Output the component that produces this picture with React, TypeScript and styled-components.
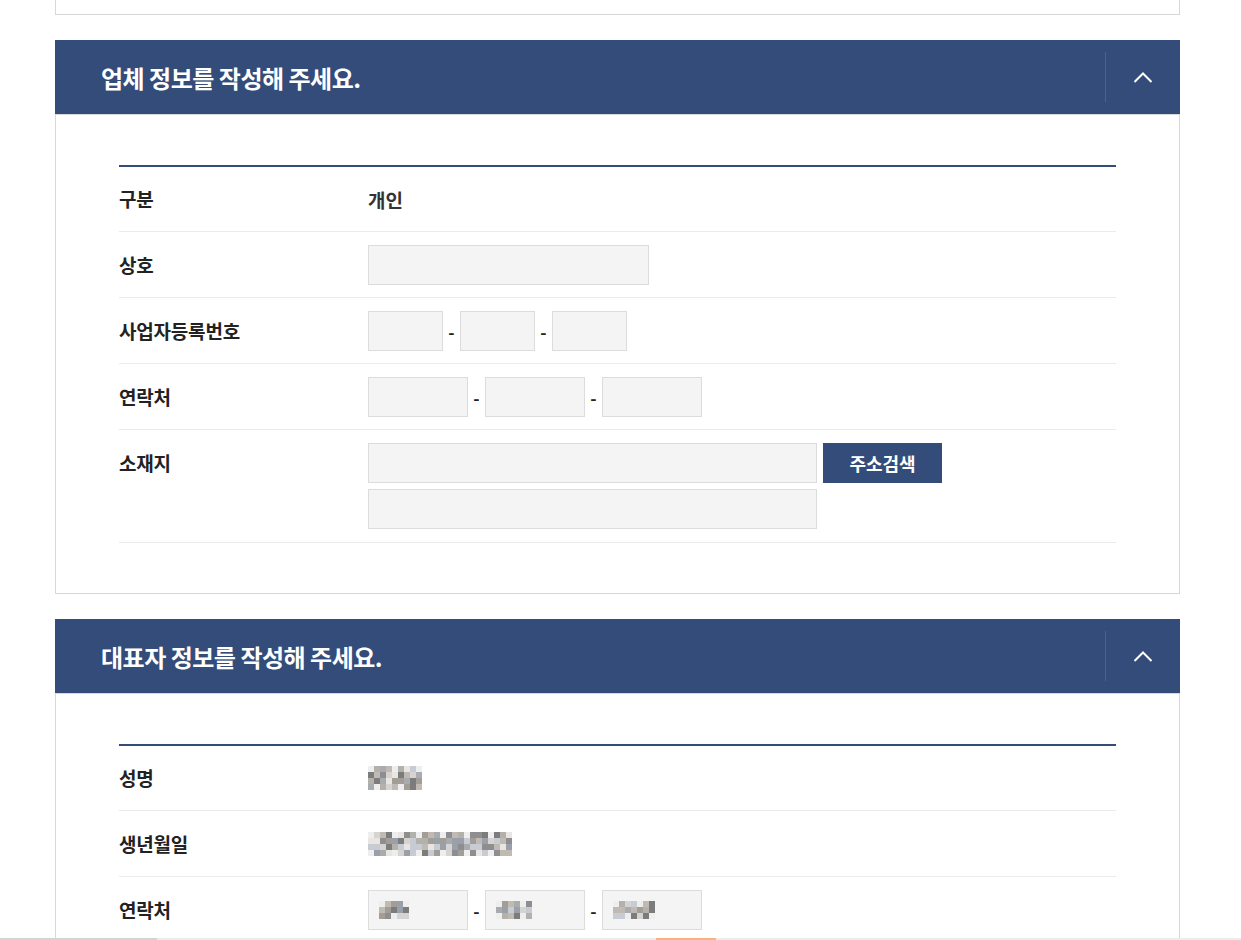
import React from 'react'
import styled, { createGlobalStyle } from 'styled-components'

const GlobalStyle = createGlobalStyle`
  html, body {
    margin: 0;
    padding: 0;
    background: #fff;
  }
  body {
    font-family: "Noto Sans CJK KR", "Noto Sans", sans-serif;
    color: #222;
  }
`

const Page = styled.div`
  width: 1125px;
  margin-left: 55px;
  display: flex;
  flex-direction: column;
  gap: 25px;
  padding-bottom: 40px;
`

const CutCard = styled.div`
  height: 14px;
  border: 1px solid #d7d7d7;
  border-top: none;
`

const Section = styled.section`
  display: flex;
  flex-direction: column;
`

const Header = styled.div`
  height: 74px;
  background: #344c79;
  display: flex;
  align-items: center;
`

const Title = styled.h2`
  flex: 1;
  margin: 0;
  padding-left: 46px;
  font-size: 24px;
  font-weight: 700;
  color: #fff;
  letter-spacing: -0.5px;
`

const Toggle = styled.button`
  width: 75px;
  height: 50px;
  border: none;
  border-left: 1px solid #4a6290;
  background: transparent;
  display: flex;
  align-items: center;
  justify-content: center;
  padding: 0;
  cursor: pointer;
`

const Body = styled.div`
  border: 1px solid #d7d7d7;
  padding: 50px 63px;
`

const Table = styled.div`
  border-top: 2px solid #344c79;
`

const Row = styled.div<{ $top?: number; $bottom?: number }>`
  display: flex;
  align-items: flex-start;
  padding: ${p => p.$top ?? 13}px 0 ${p => p.$bottom ?? 12}px;
  border-bottom: 1px solid #ebebeb;
`

const Label = styled.div`
  width: 249px;
  flex-shrink: 0;
  height: 40px;
  line-height: 40px;
  font-size: 19px;
  font-weight: 700;
  color: #222;
  letter-spacing: -0.2px;
`

const Value = styled.div`
  display: flex;
  flex-direction: column;
  gap: 6px;
`

const Line = styled.div`
  display: flex;
  align-items: center;
  min-height: 40px;
  font-size: 19px;
  font-weight: 700;
  color: #333;
`

const Input = styled.div<{ $w: number }>`
  box-sizing: border-box;
  width: ${p => p.$w}px;
  height: 40px;
  background: #f4f4f4;
  border: 1px solid #dcdcdc;
  display: flex;
  align-items: center;
  padding-left: 10px;
`

const Dash = styled.span`
  width: 17px;
  text-align: center;
  font-size: 17px;
  font-weight: 700;
  color: #222;
`

const SearchButton = styled.button`
  margin-left: 6px;
  width: 119px;
  height: 40px;
  border: none;
  background: #344c79;
  color: #fff;
  font-family: inherit;
  font-size: 18px;
  font-weight: 700;
  padding: 0;
`

const BottomBar = styled.div`
  position: fixed;
  left: 0;
  right: 0;
  bottom: 0;
  height: 2px;
  background: #ececec;
  display: flex;
`

const BarSeg = styled.div<{ $w: number; $color: string; $ml?: number }>`
  width: ${p => p.$w}px;
  margin-left: ${p => p.$ml ?? 0}px;
  background: ${p => p.$color};
`

const greys = ['#e9e6e2', '#a9abaf', '#c1bab2', '#9aa0aa', '#7c7c7c', '#b4b0ac', '#d6d4d2', '#8e8e90', '#c7ccd2', '#a39d97']

// blurred personal data in the reference, drawn as a pixel mosaic
function Mosaic({ cols, rows, seed }: { cols: number; rows: number; seed: number }) {
  const cells: React.ReactNode[] = []
  let s = seed
  for (let r = 0; r < rows; r++) {
    for (let c = 0; c < cols; c++) {
      s = (s * 9301 + 49297) % 233280
      const edge = r === 0 || r === rows - 1
      const idx = Math.floor((s / 233280) * greys.length)
      cells.push(
        <rect key={r + '-' + c} x={c * 6} y={r * 6} width={6} height={6} fill={edge && s % 4 === 0 ? '#eeeeee' : greys[idx]} />
      )
    }
  }
  return (
    <svg width={cols * 6} height={rows * 6} style={{ display: 'block' }}>
      {cells}
    </svg>
  )
}

function Chevron() {
  return (
    <svg width="20" height="12" viewBox="0 0 20 12">
      <path d="M1.5 11 L10 2.5 L18.5 11" fill="none" stroke="#fff" strokeWidth="2" />
    </svg>
  )
}

function SectionHeader({ title }: { title: string }) {
  return (
    <Header>
      <Title>{title}</Title>
      <Toggle aria-label="접기">
        <Chevron />
      </Toggle>
    </Header>
  )
}

export default function App() {
  return (
    <>
      <GlobalStyle />
      <Page>
        <CutCard />

        <Section>
          <SectionHeader title="업체 정보를 작성해 주세요." />
          <Body>
            <Table>
              <Row $top={12}>
                <Label>구분</Label>
                <Value>
                  <Line>개인</Line>
                </Value>
              </Row>
              <Row>
                <Label>상호</Label>
                <Value>
                  <Line>
                    <Input $w={281} />
                  </Line>
                </Value>
              </Row>
              <Row>
                <Label>사업자등록번호</Label>
                <Value>
                  <Line>
                    <Input $w={75} />
                    <Dash>-</Dash>
                    <Input $w={75} />
                    <Dash>-</Dash>
                    <Input $w={75} />
                  </Line>
                </Value>
              </Row>
              <Row>
                <Label>연락처</Label>
                <Value>
                  <Line>
                    <Input $w={100} />
                    <Dash>-</Dash>
                    <Input $w={100} />
                    <Dash>-</Dash>
                    <Input $w={100} />
                  </Line>
                </Value>
              </Row>
              <Row $bottom={13}>
                <Label>소재지</Label>
                <Value>
                  <Line>
                    <Input $w={449} />
                    <SearchButton>주소검색</SearchButton>
                  </Line>
                  <Line>
                    <Input $w={449} />
                  </Line>
                </Value>
              </Row>
            </Table>
          </Body>
        </Section>

        <Section>
          <SectionHeader title="대표자 정보를 작성해 주세요." />
          <Body>
            <Table>
              <Row $top={12}>
                <Label>성명</Label>
                <Value>
                  <Line>
                    <Mosaic cols={9} rows={4} seed={7} />
                  </Line>
                </Value>
              </Row>
              <Row>
                <Label>생년월일</Label>
                <Value>
                  <Line>
                    <Mosaic cols={24} rows={4} seed={31} />
                  </Line>
                </Value>
              </Row>
              <Row>
                <Label>연락처</Label>
                <Value>
                  <Line>
                    <Input $w={100}>
                      <Mosaic cols={5} rows={3} seed={3} />
                    </Input>
                    <Dash>-</Dash>
                    <Input $w={100}>
                      <Mosaic cols={6} rows={3} seed={11} />
                    </Input>
                    <Dash>-</Dash>
                    <Input $w={100}>
                      <Mosaic cols={7} rows={3} seed={19} />
                    </Input>
                  </Line>
                </Value>
              </Row>
            </Table>
          </Body>
        </Section>
      </Page>
      <BottomBar>
        <BarSeg $w={157} $color="#d4d4d4" />
        <BarSeg $w={60} $ml={499} $color="#f9b37b" />
      </BottomBar>
    </>
  )
}
